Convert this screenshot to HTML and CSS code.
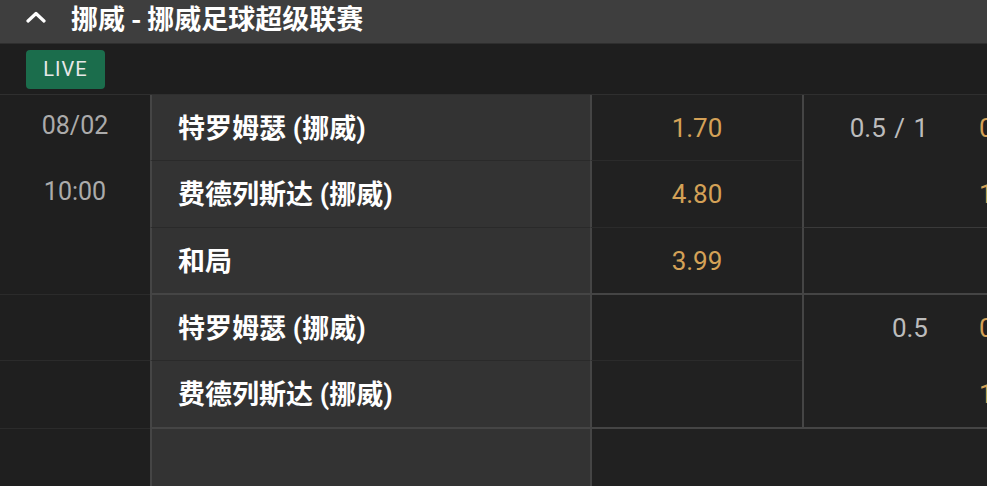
FILE: index.html
```html
<!DOCTYPE html>
<html lang="zh">
<head>
    <meta charset="UTF-8">
    <title>挪威 - 挪威足球超级联赛</title>
    <link rel="stylesheet" href="styles.css">
</head>
<body>
    <div class="league-head">
        <svg class="chev" width="20" height="12" viewBox="0 0 20 12">
            <path d="M2 10 L10 2.5 L18 10" fill="none" stroke="#fff" stroke-width="3.2" stroke-linecap="round" stroke-linejoin="round"/>
        </svg>
        <h2>挪威 - 挪威足球超级联赛</h2>
    </div>

    <div class="live-bar">
        <span class="live">LIVE</span>
    </div>

    <!-- 1X2 -->
    <div class="group">
        <div class="when">08/02</div>
        <div class="team">特罗姆瑟 (挪威)</div>
        <div class="odds">1.70</div>
        <div class="hdp span2">
            <div class="hdp-row"><span class="line">0.5 / 1</span><span class="price">0.92</span></div>
            <div class="hdp-row"><span class="line"></span><span class="price">1.00</span></div>
        </div>

        <div class="when">10:00</div>
        <div class="team">费德列斯达 (挪威)</div>
        <div class="odds">4.80</div>

        <div class="when last"></div>
        <div class="team last">和局</div>
        <div class="odds last">3.99</div>
        <div class="hdp last"></div>
    </div>

    <!-- 1X2 half -->
    <div class="group two">
        <div class="when thin"></div>
        <div class="team">特罗姆瑟 (挪威)</div>
        <div class="odds"></div>
        <div class="hdp span2 last">
            <div class="hdp-row"><span class="line">0.5</span><span class="price">0.86</span></div>
            <div class="hdp-row"><span class="line"></span><span class="price">1.04</span></div>
        </div>

        <div class="when thin"></div>
        <div class="team last">费德列斯达 (挪威)</div>
        <div class="odds last"></div>
    </div>

    <div class="group rest">
        <div class="when"></div>
        <div class="team"></div>
        <div class="odds wide"></div>
    </div>
</body>
</html>
```

FILE: styles.css
```css
body {
    margin: 0;
    background-color: #1f1f1f;
    font-family: Roboto, "Noto Sans CJK SC", sans-serif;
    color: white;
    overflow: hidden;
    height: 486px;
}

.league-head {
    height: 44px;
    background-color: #3e3e3e;
    border-bottom: 1px solid #2e2e2e;
    display: flex;
    align-items: center;
    padding-left: 26px;
    box-sizing: border-box;
}

.chev {
    margin-top: -9px;
}

.league-head h2 {
    margin: -8px 0 0 25px;
    font-family: "Noto Sans CJK SC", sans-serif;
    font-size: 27px;
    font-weight: bold;
    line-height: 1.3;
}

.live-bar {
    height: 51px;
    background-color: #1e1e1e;
    border-bottom: 1px solid #2f2f2f;
    box-sizing: border-box;
    padding: 6px 0 0 26px;
}

.live {
    display: inline-block;
    width: 79px;
    height: 39px;
    line-height: 39px;
    text-align: center;
    background-color: #1b6d4c;
    border-radius: 4px;
    color: #e8e8e8;
    font-size: 20px;
    letter-spacing: 1px;
}

.group {
    display: grid;
    grid-template-columns: 150px 440px 212px 1fr;
    grid-template-rows: 66px 67px 67px;
}

.group.two {
    grid-template-rows: 66px 68px;
}

.group.rest {
    grid-template-rows: 60px;
}

.when {
    background-color: #1f1f1f;
    color: #ababab;
    font-size: 25px;
    text-align: center;
    padding-top: 16px;
    box-sizing: border-box;
}

.when.last {
    border-bottom: 1px solid #2b2b2b;
}

.when.thin {
    border-bottom: 1px solid #2b2b2b;
}

.team {
    background-color: #333333;
    border-left: 2px solid #454545;
    border-bottom: 1px solid #2a2a2a;
    padding: 0 0 3px 26px;
    display: flex;
    align-items: center;
    font-family: Roboto, "Noto Sans CJK SC", sans-serif;
    font-weight: bold;
    font-size: 27px;
    box-sizing: border-box;
}

.odds {
    background-color: #212121;
    border-left: 2px solid #454545;
    border-bottom: 1px solid #2b2b2b;
    display: flex;
    align-items: center;
    justify-content: center;
    color: #d4a157;
    font-size: 26px;
    box-sizing: border-box;
}

.odds.wide {
    grid-column: 3 / 5;
    border-bottom: none;
}

.hdp {
    background-color: #212121;
    border-left: 2px solid #454545;
    border-bottom: 1px solid #3a3a3a;
    box-sizing: border-box;
}

.hdp.span2 {
    grid-row: span 2;
}

.last {
    border-bottom: 2px solid #454545;
}

.hdp-row {
    height: 66px;
    display: flex;
    align-items: center;
    font-size: 26px;
}

.line {
    width: 124px;
    text-align: right;
    color: #bcbcbc;
    word-spacing: 2px;
}

.price {
    margin-left: 51px;
    color: #d4a157;
}
```
